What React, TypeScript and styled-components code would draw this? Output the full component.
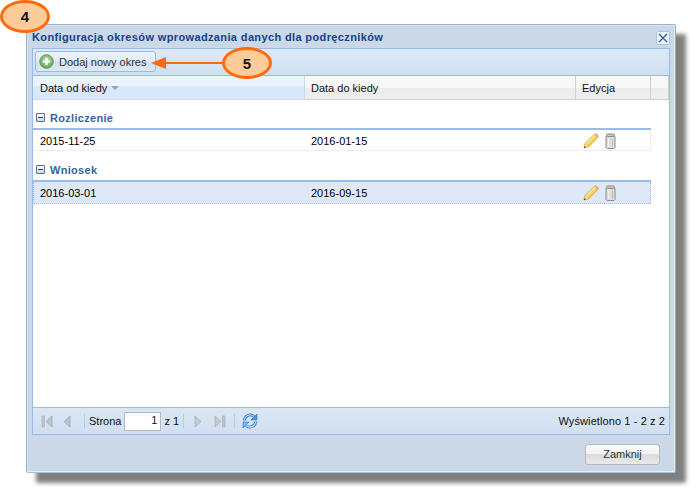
import React from "react";
import styled, { createGlobalStyle } from "styled-components";

const Global = createGlobalStyle`
  html, body { margin: 0; padding: 0; background: #fff; }
  body { font-family: "Liberation Sans", Arial, sans-serif; font-size: 11px; color: #000; }
`;

const Page = styled.div`
  position: relative;
  width: 696px;
  height: 493px;
  padding: 24px 0 0 26px;
  box-sizing: border-box;
  overflow: hidden;
`;

const Win = styled.div`
  width: 650px;
  height: 449px;
  box-sizing: border-box;
  background: #cbd8e7;
  border: 1px solid #99b3d3;
  border-right-color: #8fa9c9;
  border-bottom-color: #a9bfd9;
  border-radius: 2px;
  box-shadow: 10px 10px 4px #808080, inset -1px -1px 0 #e6eef7, inset 1px 1px 0 #d8e3f0;
  padding: 0 5px;
  display: flex;
  flex-direction: column;
`;

const TitleBar = styled.div`
  height: 23px;
  display: flex;
  align-items: center;
  justify-content: space-between;
  padding-top: 1px;
  box-sizing: border-box;
`;

const Title = styled.div`
  font-weight: bold;
  font-size: 11px;
  letter-spacing: 0.37px;
  color: #15428b;
  white-space: nowrap;
`;

const CloseBtn = styled.div`
  width: 14px;
  height: 14px;
  margin-top: 1px;
  box-sizing: border-box;
  background: #edf3fc;
  border: 1px solid #a9c3e6;
  border-radius: 2px;
  display: flex;
  align-items: center;
  justify-content: center;
`;

const Panel = styled.div`
  height: 387px;
  box-sizing: border-box;
  border: 1px solid #99bbe8;
  background: #fff;
  display: flex;
  flex-direction: column;
`;

const Toolbar = styled.div`
  height: 27px;
  flex: none;
  box-sizing: border-box;
  padding: 2px 2px;
  background: linear-gradient(#dfe9f6, #cfdff1);
  border-bottom: 1px solid #99bbe8;
`;

const AddBtn = styled.div`
  width: 121px;
  height: 21px;
  box-sizing: border-box;
  display: flex;
  align-items: center;
  gap: 5px;
  padding-left: 3px;
  border: 1px solid #9fb9dc;
  border-radius: 3px;
  background: linear-gradient(#edf3fb 0%, #e2ecf8 48%, #d2e1f3 52%, #dce8f6 100%);
  color: #333;
  font-size: 11px;
  white-space: nowrap;
`;

const Header = styled.div`
  height: 24px;
  flex: none;
  display: grid;
  grid-template-columns: 272px 271px 75px 1fr;
  box-sizing: border-box;
  border-bottom: 1px solid #d0d0d0;
  background: linear-gradient(#f8f8f8 0%, #f8f8f8 50%, #ececed 51%, #eeeeef 100%);
`;

const HeadCell = styled.div<{ $active?: boolean }>`
  display: flex;
  align-items: center;
  gap: 4px;
  padding-left: ${p => (p.$active ? 7 : 6)}px;
  font-size: 11px;
  color: #111;
  border-right: 1px solid ${p => (p.$active ? "#c6daf0" : "#d0d0d0")};
  ${p => p.$active && "background: linear-gradient(#ebf3fd 0%, #ebf3fd 45%, #d9e8fb 46%, #d9e8fb 100%); margin-bottom: -1px; border-bottom: 1px solid #c6daf0;"}
`;

const SortArrow = styled.span`
  width: 0;
  height: 0;
  border-left: 4px solid transparent;
  border-right: 4px solid transparent;
  border-top: 4px solid #8aa4cd;
  margin-top: 1px;
`;

const GridBody = styled.div`
  flex: 1;
  width: 618px;
  padding-top: 7px;
`;

const GroupHead = styled.div`
  height: 23px;
  box-sizing: border-box;
  display: flex;
  align-items: center;
  gap: 5px;
  padding-left: 3px;
  font-weight: bold;
  font-size: 11px;
  letter-spacing: 0.3px;
  color: #3764a0;
  border-bottom: 2px solid #99bbe8;
`;

const Collapse = styled.span`
  width: 7px;
  height: 7px;
  box-sizing: content-box;
  border: 1px solid #5c6f8c;
  border-radius: 1px;
  background: linear-gradient(#fff, #c9d6e6);
  position: relative;
  display: inline-block;
  &::after {
    content: "";
    position: absolute;
    left: 1px;
    right: 1px;
    top: 3px;
    height: 1px;
    background: #2b3f5f;
  }
`;

const Row = styled.div<{ $selected?: boolean }>`
  height: ${p => (p.$selected ? 22 : 21)}px;
  box-sizing: border-box;
  display: grid;
  grid-template-columns: 271px 271px 1fr;
  align-items: center;
  font-size: 11px;
  color: #000;
  margin-bottom: ${p => (p.$selected ? 0 : 8)}px;
  border: 1px solid #ededed;
  border-top-color: #fff;
  border-left-color: #fff;
  ${p => p.$selected && "background: #dfe8f6; border: 1px dotted #a3bae9; border-top: none;"}
`;

const DateCell = styled.div`
  padding-left: 6px;
`;

const Actions = styled.div`
  display: flex;
  align-items: center;
  gap: 6px;
  padding-left: 7px;
  height: 16px;
`;

const Pager = styled.div`
  height: 27px;
  flex: none;
  box-sizing: border-box;
  display: flex;
  align-items: center;
  padding: 0 4px 0 7px;
  background: linear-gradient(#dbe6f4, #d0dff1);
  border-top: 1px solid #99bbe8;
  font-size: 11px;
  color: #111;
`;

const PagerIcon = styled.span<{ $w: number }>`
  width: ${p => p.$w}px;
  display: flex;
  align-items: center;
  justify-content: center;
`;

const Sep = styled.span`
  width: 1px;
  height: 14px;
  background: #b0cdec;
  margin: 0 4px;
`;

const PageInput = styled.div`
  width: 37px;
  height: 19px;
  box-sizing: border-box;
  margin: 0 3px;
  padding-right: 3px;
  border: 1px solid #b5b8c8;
  background: linear-gradient(#f4f7f8, #fff 30%);
  text-align: right;
  line-height: 15px;
  font-size: 11px;
`;

const PagerInfo = styled.div`
  margin-left: auto;
  letter-spacing: 0.1px;
`;

const Footer = styled.div`
  flex: 1;
  display: flex;
  justify-content: flex-end;
  align-items: flex-start;
  padding: 9px 10px 0 0;
`;

const CloseButton = styled.div`
  width: 75px;
  height: 21px;
  box-sizing: border-box;
  border: 1px solid #b4b9bf;
  border-radius: 3px;
  background: linear-gradient(#fbfbfb 0%, #f2f2f2 48%, #dcdcdc 50%, #e9e9e9 100%);
  text-align: center;
  line-height: 18px;
  font-size: 11px;
  color: #333;
`;

const Badge = styled.div<{ $x: number; $y: number; $w: number; $h: number }>`
  position: absolute;
  left: ${p => p.$x}px;
  top: ${p => p.$y}px;
  width: ${p => p.$w}px;
  height: ${p => p.$h}px;
  box-sizing: border-box;
  border: 3px solid #ff6a0d;
  border-radius: 50%;
  background: #ffcc99;
  display: flex;
  align-items: center;
  justify-content: center;
  font-weight: bold;
  font-size: 15px;
  color: #111;
`;

const ArrowSvg = styled.svg`
  position: absolute;
  left: 148px;
  top: 55px;
`;

const Plus = () => (
  <svg width="15" height="15" viewBox="0 0 15 15">
    <defs>
      <radialGradient id="pg" cx="50%" cy="40%" r="60%">
        <stop offset="0" stopColor="#bfe0a8" />
        <stop offset="1" stopColor="#5fa04f" />
      </radialGradient>
    </defs>
    <circle cx="7.5" cy="7.5" r="6.8" fill="url(#pg)" stroke="#6f9c67" />
    <path d="M6.2 3.8h2.6v2.4h2.4v2.6H8.8v2.4H6.2V8.8H3.8V6.2h2.4z" fill="#f4f8f0" />
  </svg>
);

const Pencil = () => (
  <svg width="16" height="16" viewBox="0 0 16 16">
    <path d="M1 15l1-4.5L11.5 1.2c.8-.6 1.8-.5 2.5.2l.8.8c.6.7.6 1.6 0 2.3L5.5 14z" fill="#f6cf55" stroke="#d99a3a" strokeWidth=".8" />
    <path d="M3.5 11L12.5 2" stroke="#fff0b0" strokeWidth="1.2" />
    <path d="M11.3 1.5l3.2 3.2.4-1c.3-.7.1-1.3-.3-1.8l-.8-.7c-.6-.5-1.4-.5-2.5.3z" fill="#e9a98a" />
    <path d="M1 15l1-4 3 3z" fill="#f3dcae" />
    <path d="M1 15l.5-2 1.5 1.5z" fill="#5a2c08" />
  </svg>
);

const Trash = () => (
  <svg width="11" height="16" viewBox="0 0 11 16">
    <path d="M1.5 2.5h8l.5 1v11l-1 1h-7l-1-1v-11z" fill="#dedede" stroke="#8c8c8c" />
    <rect x="1.5" y="1" width="8" height="2.5" rx="1" fill="#c8c8c8" stroke="#8c8c8c" />
    <path d="M3.500 5.500v8" stroke="#f2f2f2" />
    <path d="M7.500 5.500v8" stroke="#bcbcbc" />
  </svg>
);

const First = () => (
  <svg width="13" height="13" viewBox="0 0 13 13">
    <rect x="1" y="1" width="2.5" height="11" fill="#c0c4c8" stroke="#a8acb0" strokeWidth=".6" />
    <path d="M11 1v11L5 6.5z" fill="#c0c4c8" stroke="#a0a4a8" strokeWidth=".7" />
  </svg>
);

const Prev = () => (
  <svg width="8" height="13" viewBox="0 0 8 13">
    <path d="M7 1v11L1 6.5z" fill="#c0c4c8" stroke="#a0a4a8" strokeWidth=".7" />
  </svg>
);

const Next = () => (
  <svg width="8" height="13" viewBox="0 0 8 13">
    <path d="M1 1v11l6-5.5z" fill="#c6cacd" stroke="#a8acb0" strokeWidth=".7" />
  </svg>
);

const Last = () => (
  <svg width="13" height="13" viewBox="0 0 13 13">
    <path d="M2 1v11l6-5.5z" fill="#c6cacd" stroke="#a8acb0" strokeWidth=".7" />
    <rect x="9.5" y="1" width="2.5" height="11" fill="#c0c4c8" stroke="#a8acb0" strokeWidth=".6" />
  </svg>
);

const Refresh = () => (
  <svg width="16" height="16" viewBox="0 0 16 16" fill="none">
    <path d="M2.300 7.500A5.800 5.800 0 0 1 12 3.500" stroke="#2a75c9" strokeWidth="2.800" />
    <path d="M2.300 7.500A5.800 5.800 0 0 1 12 3.500" stroke="#a9d0f5" strokeWidth="1.200" />
    <path d="M15 1v6H9z" fill="#4d93dc" stroke="#2a75c9" strokeWidth=".6" />
    <path d="M13.700 8.500A5.800 5.800 0 0 1 4 12.500" stroke="#2a75c9" strokeWidth="2.800" />
    <path d="M13.700 8.500A5.800 5.800 0 0 1 4 12.500" stroke="#cfe5fa" strokeWidth="1.200" />
    <path d="M1 15V9h6z" fill="#7db4ec" stroke="#2a75c9" strokeWidth=".6" />
  </svg>
);

export default function App() {
  return (
    <Page>
      <Global />
      <Win>
        <TitleBar>
          <Title>Konfiguracja okresów wprowadzania danych dla podręczników</Title>
          <CloseBtn>
            <svg width="10" height="10" viewBox="0 0 10 10">
              <path d="M1 1l8 8M9 1l-8 8" stroke="#2f5f9e" strokeWidth="1.300" />
            </svg>
          </CloseBtn>
        </TitleBar>
        <Panel>
          <Toolbar>
            <AddBtn>
              <Plus />
              Dodaj nowy okres
            </AddBtn>
          </Toolbar>
          <Header>
            <HeadCell $active>
              Data od kiedy <SortArrow />
            </HeadCell>
            <HeadCell>Data do kiedy</HeadCell>
            <HeadCell>Edycja</HeadCell>
            <HeadCell />
          </Header>
          <GridBody>
            <GroupHead>
              <Collapse />
              Rozliczenie
            </GroupHead>
            <Row>
              <DateCell>2015-11-25</DateCell>
              <DateCell>2016-01-15</DateCell>
              <Actions>
                <Pencil />
                <Trash />
              </Actions>
            </Row>
            <GroupHead>
              <Collapse />
              Wniosek
            </GroupHead>
            <Row $selected>
              <DateCell>2016-03-01</DateCell>
              <DateCell>2016-09-15</DateCell>
              <Actions>
                <Pencil />
                <Trash />
              </Actions>
            </Row>
          </GridBody>
          <Pager>
            <PagerIcon $w={14}><First /></PagerIcon>
            <PagerIcon $w={26}><Prev /></PagerIcon>
            <Sep />
            Strona
            <PageInput>1</PageInput>
            z 1
            <Sep />
            <PagerIcon $w={20}><Next /></PagerIcon>
            <PagerIcon $w={22}><Last /></PagerIcon>
            <Sep />
            <PagerIcon $w={22}><Refresh /></PagerIcon>
            <PagerInfo>Wyświetlono 1 - 2 z 2</PagerInfo>
          </Pager>
        </Panel>
        <Footer>
          <CloseButton>Zamknij</CloseButton>
        </Footer>
      </Win>
      <Badge $x={0} $y={0} $w={50} $h={33}>4</Badge>
      <ArrowSvg width="76" height="16" viewBox="0 0 76 16">
        <path d="M76 8H18" stroke="#ff6a0d" strokeWidth="2" />
        <path d="M3 8l15-6v12z" fill="#ff6a0d" />
      </ArrowSvg>
      <Badge $x={222} $y={47} $w={50} $h={32}>5</Badge>
    </Page>
  );
}
